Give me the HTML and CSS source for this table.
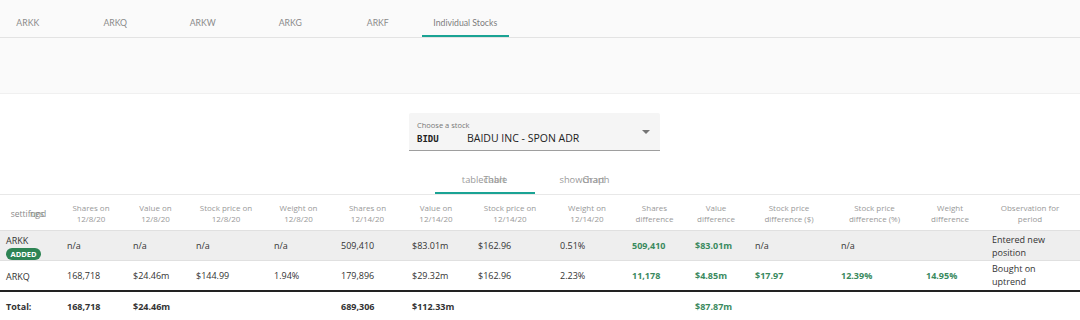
FILE: index.html
```html
<!DOCTYPE html>
<html>
<head>
<meta charset="utf-8">
<link rel="stylesheet" href="styles.css">
</head>
<body>
<header class="topbar">
  <nav class="tabs">
    <div class="tab">ARKK</div>
    <div class="tab">ARKQ</div>
    <div class="tab">ARKW</div>
    <div class="tab">ARKG</div>
    <div class="tab">ARKF</div>
    <div class="tab active">Individual Stocks</div>
  </nav>
</header>
<main class="content">
  <div class="picker-row">
    <div class="picker">
      <div class="picker-label">Choose a stock</div>
      <div class="picker-value"><span class="ticker">BIDU</span><span class="name">BAIDU INC - SPON ADR</span></div>
      <svg class="caret" width="8" height="4" viewBox="0 0 8 4"><path d="M0 0h8L4 4z" fill="#757575"/></svg>
    </div>
  </div>
  <div class="toggle-row">
    <div class="toggle active"><span>table</span><span class="stack"><span>chart</span><span>Table</span></span></div>
    <div class="toggle"><span>show</span><span class="stack"><span>chart</span><span>Graph</span></span></div>
  </div>
  <table class="grid">
    <colgroup>
      <col style="width:61px"><col style="width:66px"><col style="width:63px"><col style="width:78px"><col style="width:67px"><col style="width:71px"><col style="width:66px"><col style="width:82px"><col style="width:72px"><col style="width:63px"><col style="width:60px"><col style="width:86px"><col style="width:85px"><col style="width:66px"><col>
    </colgroup>
    <thead>
      <tr>
        <th><span>setti</span><span class="stack"><span>ngs</span><span>fund</span></span></th>
        <th>Shares on<br>12/8/20</th>
        <th>Value on<br>12/8/20</th>
        <th>Stock price on<br>12/8/20</th>
        <th>Weight on<br>12/8/20</th>
        <th>Shares on<br>12/14/20</th>
        <th>Value on<br>12/14/20</th>
        <th>Stock price on<br>12/14/20</th>
        <th>Weight on<br>12/14/20</th>
        <th>Shares<br>difference</th>
        <th>Value<br>difference</th>
        <th>Stock price<br>difference ($)</th>
        <th>Stock price<br>difference (%)</th>
        <th>Weight<br>difference</th>
        <th>Observation for<br>period</th>
      </tr>
    </thead>
    <tbody>
      <tr class="added">
        <td class="fund">ARKK<br><span class="badge">ADDED</span></td>
        <td>n/a</td><td>n/a</td><td>n/a</td><td>n/a</td>
        <td>509,410</td><td>$83.01m</td><td>$162.96</td><td>0.51%</td>
        <td class="pos">509,410</td><td class="pos">$83.01m</td><td>n/a</td><td>n/a</td><td></td>
        <td>Entered new<br>position</td>
      </tr>
      <tr>
        <td class="fund">ARKQ</td>
        <td>168,718</td><td>$24.46m</td><td>$144.99</td><td>1.94%</td>
        <td>179,896</td><td>$29.32m</td><td>$162.96</td><td>2.23%</td>
        <td class="pos">11,178</td><td class="pos">$4.85m</td><td class="pos">$17.97</td><td class="pos">12.39%</td><td class="pos">14.95%</td>
        <td>Bought on<br>uptrend</td>
      </tr>
    </tbody>
    <tfoot>
      <tr>
        <td>Total:</td>
        <td>168,718</td><td>$24.46m</td><td></td><td></td>
        <td>689,306</td><td>$112.33m</td><td></td><td></td>
        <td></td><td class="pos">$87.87m</td><td></td><td></td><td></td><td></td>
      </tr>
    </tfoot>
  </table>
</main>
</body>
</html>
```
FILE: styles.css
```css
* { box-sizing: border-box; }
html, body { margin: 0; padding: 0; }
body {
  width: 1080px;
  height: 320px;
  overflow: hidden;
  background: #fff;
  font-family: "Open Sans", "Noto Sans", sans-serif;
  color: #333;
}
.topbar {
  height: 94px;
  background: #fafafa;
  border-bottom: 1px solid #f0f0f0;
}
.tabs {
  display: flex;
  height: 38px;
  border-bottom: 1px solid #e3e3e3;
  margin-left: -16px;
}
.tab {
  width: 87.5px;
  display: flex;
  align-items: center;
  justify-content: center;
  padding-top: 9px;
  font-family: "Lato", "Open Sans", sans-serif;
  font-size: 8.7px;
  color: #8a8a8a;
  border-bottom: 2px solid transparent;
}
.tab.active {
  border-bottom-color: #1aa394;
  color: #7d7d7d;
}
.content {
  padding-right: 11px;
}
.picker-row {
  display: flex;
  justify-content: center;
  padding-top: 19px;
}
.picker {
  position: relative;
  width: 251px;
  height: 38px;
  background: #f5f5f5;
  border-bottom: 1px solid #9e9e9e;
  border-radius: 2px 2px 0 0;
  padding: 7px 8px 0 8px;
}
.picker-label {
  font-size: 7.5px;
  color: #777;
  line-height: 10px;
}
.picker-value {
  display: flex;
  align-items: baseline;
  margin-top: 2px;
  line-height: 13px;
}
.ticker {
  font-family: "DejaVu Sans Mono", monospace;
  font-weight: bold;
  font-size: 9px;
  color: #222;
  width: 50px;
}
.name {
  font-size: 10.5px;
  color: #222;
}
.caret {
  position: absolute;
  right: 10px;
  top: 17px;
}
.toggle-row {
  display: flex;
  justify-content: center;
  margin-top: 15px;
}
.toggle {
  width: 100px;
  height: 28px;
  display: flex;
  align-items: center;
  justify-content: center;
  font-size: 9.3px;
  color: #9a9a9a;
  border-bottom: 2px solid transparent;
}
.toggle.active { border-bottom-color: #1aa394; }
.stack {
  display: inline-grid;
}
.stack > span {
  grid-area: 1 / 1;
}
.grid {
  width: 1080px;
  margin-right: -11px;
  border-collapse: collapse;
  table-layout: fixed;
  font-size: 9px;
  color: #333;
}
.grid thead tr {
  border-top: 1px solid #e8e8e8;
  border-bottom: 1px solid #e0e0e0;
}
.grid th {
  height: 36px;
  font-weight: normal;
  font-size: 8px;
  line-height: 11px;
  color: #999;
  text-align: center;
  padding: 0 10px 0 4px;
}
.grid th:first-child { font-size: 8.5px; color: #8a8a8a; padding: 2px 10px 0 6px; }
.grid td {
  height: 30px;
  padding: 0 4px 0 6px;
  line-height: 13px;
  text-align: left;
  vertical-align: middle;
  white-space: nowrap;
}
.grid tbody tr { border-bottom: 1px solid #e0e0e0; }
.grid tbody tr:last-child { border-bottom: 2px solid #222; }
.grid tr.added { background: #eeeeee; }
.grid td.fund { padding-top: 2px; }
.badge {
  display: inline-block;
  background: #2e8454;
  color: #fff;
  font-size: 7.5px;
  font-weight: bold;
  line-height: 12px;
  padding: 0 4.5px;
  border-radius: 7px;
  margin-top: 1px;
}
.grid td.pos { color: #3a8a5e; font-weight: bold; }
.grid tfoot td { font-weight: bold; height: 30px; color: #333; }
```
